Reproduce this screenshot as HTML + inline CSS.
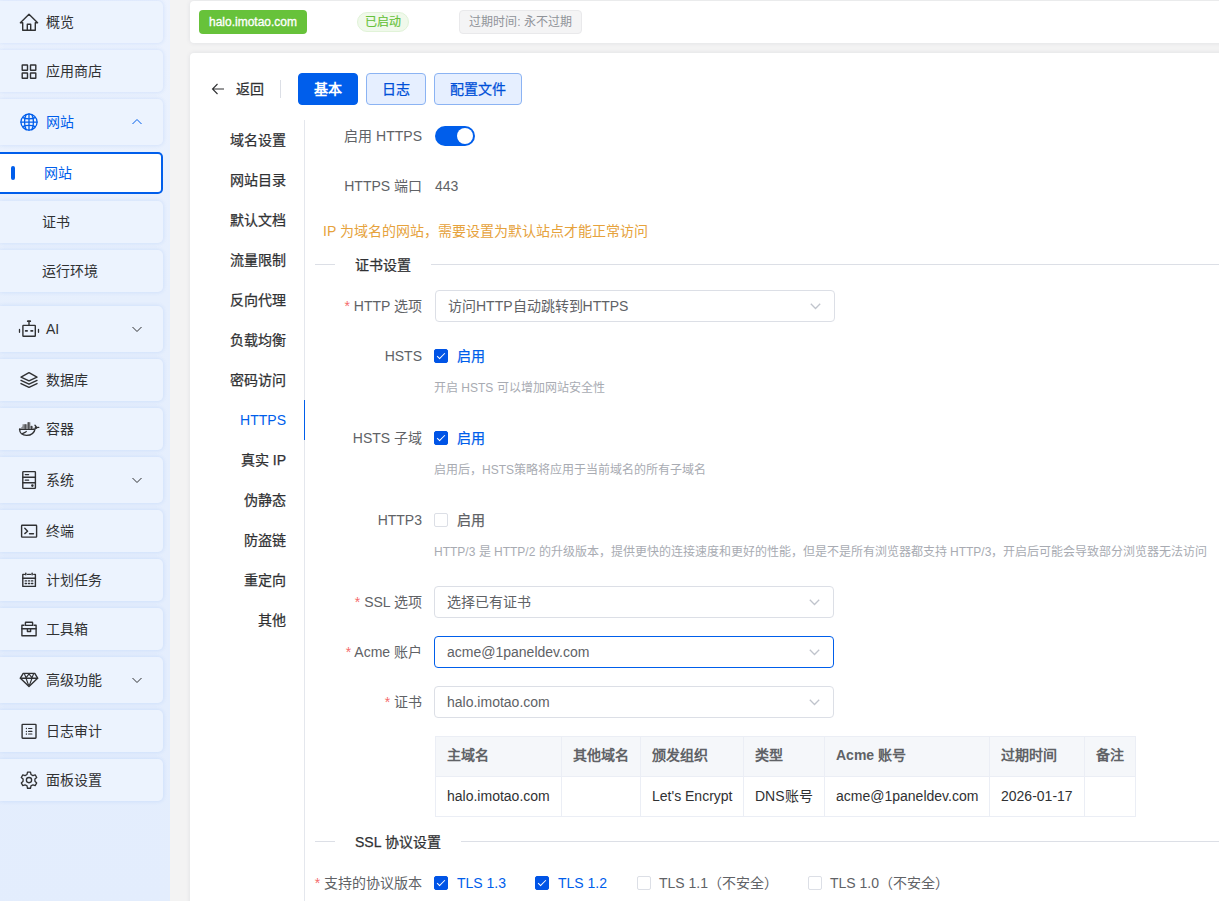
<!DOCTYPE html>
<html lang="zh-CN"><head><meta charset="utf-8">
<style>
*{box-sizing:border-box;margin:0;padding:0}
html,body{width:1219px;height:901px;overflow:hidden}
body{font-family:"Liberation Sans",sans-serif;font-size:14px;color:#1f2329;background:#f3f3f3;position:relative}
.abs{position:absolute}
#side{left:0;top:0;width:170px;height:901px;background:linear-gradient(170deg,#edf3fe 0%,#e6effd 35%,#e3edfd 100%)}
.mi{position:absolute;left:0;width:163px;height:42px;background:#ecf3fe;border-radius:0 5px 5px 0;box-shadow:0 0 4px rgba(40,110,230,.16)}
.mi .ic{position:absolute;left:19px;top:50%;margin-top:-9px;width:18px;height:18px}
.mi .tx{position:absolute;left:46px;top:0;line-height:42px;font-size:14px;color:#303133}
.mi.tall{height:46px}
.mi.tall .tx{line-height:46px}
.chev{position:absolute;left:131px;top:50%;margin-top:-4px;width:12px;height:8px}
.sub .tx{left:42px}
#hdr{left:190px;top:1px;width:1040px;height:42px;background:#fff;border-radius:4px;box-shadow:0 0 5px rgba(0,30,80,.09)}
#main{left:190px;top:53px;width:1040px;height:860px;background:#fff;border-radius:4px;box-shadow:0 0 5px rgba(0,30,80,.09)}
.tag{position:absolute;font-size:12px;text-align:center;border-radius:4px}
.btn{position:absolute;top:73px;height:32px;line-height:30px;text-align:center;font-size:14px;border-radius:4px;border:1px solid #8bb3f3;background:#e6efff;color:#0050d8;-webkit-text-stroke:0.25px #0050d8}
.tab{position:absolute;right:933px;font-size:14px;color:#303133;line-height:20px;-webkit-text-stroke:0.25px #303133}
.lbl{position:absolute;right:797px;font-size:14px;color:#606266;line-height:20px;white-space:nowrap}
.req{color:#f56c6c}
.sel{position:absolute;left:435px;width:400px;height:32px;border:1px solid #dcdfe6;border-radius:4px;background:#fff}
.sel .v{position:absolute;left:12px;top:0;line-height:30px;font-size:14px;color:#606266}
.sel svg{position:absolute;right:13px;top:12px}
.cb{position:absolute;width:14px;height:14px;border-radius:2px}
.cb.on{background:#0054e6;border:1px solid #0054e6}
.cb.off{background:#fff;border:1px solid #dcdfe6}
.cb.on::after{content:"";position:absolute;left:4px;top:1px;width:3px;height:7px;border:1px solid #fff;border-left:0;border-top:0;transform:rotate(45deg)}
.help{position:absolute;left:434px;font-size:12px;color:#a8abb2;line-height:16px;white-space:nowrap}
.cbl{position:absolute;font-size:14px;line-height:20px;white-space:nowrap}
.th,.td{position:absolute;line-height:20px;font-size:14px;white-space:nowrap}
.th{font-weight:bold;color:#606266}
.td{color:#303133}
.divl{position:absolute;height:1px;background:#dcdfe6}
.divt{position:absolute;font-size:14px;color:#303133;line-height:20px;-webkit-text-stroke:0.25px #303133}
</style></head><body>
<div id="side" class="abs">
  <div class="mi" style="top:1px;height:42px"><span class="tx">概览</span></div>
  <div class="mi" style="top:50px"><span class="tx">应用商店</span></div>
  <div class="mi tall" style="top:99px"><span class="tx" style="color:#005eeb">网站</span><svg class="chev" viewBox="0 0 12 8"><path d="M1.5 6l4.5-4.5 4.5 4.5" fill="none" stroke="#005eeb" stroke-width="1"/></svg></div>
  <div class="mi sub" style="top:152px;height:42px;background:#fff;border:2px solid #005eeb;border-left:0;box-shadow:none"><div class="abs" style="left:11px;top:12px;width:4px;height:14px;background:#005eeb;border-radius:2px"></div><span class="tx" style="color:#005eeb;left:44px;line-height:38px">网站</span></div>
  <div class="mi sub" style="top:201px"><span class="tx">证书</span></div>
  <div class="mi sub" style="top:250px"><span class="tx">运行环境</span></div>
  <div class="mi tall" style="top:306px"><span class="tx">AI</span><svg class="chev" viewBox="0 0 12 8"><path d="M1.5 2l4.5 4.5 4.5-4.5" fill="none" stroke="#303133" stroke-width="1"/></svg></div>
  <div class="mi" style="top:359px"><span class="tx">数据库</span></div>
  <div class="mi" style="top:408px"><span class="tx">容器</span></div>
  <div class="mi tall" style="top:457px"><span class="tx">系统</span><svg class="chev" viewBox="0 0 12 8"><path d="M1.5 2l4.5 4.5 4.5-4.5" fill="none" stroke="#303133" stroke-width="1"/></svg></div>
  <div class="mi" style="top:510px"><span class="tx">终端</span></div>
  <div class="mi" style="top:559px"><span class="tx">计划任务</span></div>
  <div class="mi" style="top:608px"><span class="tx">工具箱</span></div>
  <div class="mi tall" style="top:657px"><span class="tx">高级功能</span><svg class="chev" viewBox="0 0 12 8"><path d="M1.5 2l4.5 4.5 4.5-4.5" fill="none" stroke="#303133" stroke-width="1"/></svg></div>
  <div class="mi" style="top:710px"><span class="tx">日志审计</span></div>
  <div class="mi" style="top:759px"><span class="tx">面板设置</span></div>
<svg class="abs" style="left:16px;top:10px" width="26" height="26" viewBox="0 0 26 26"><g fill="none" stroke="#303133" stroke-width="1.4" stroke-linejoin="round" stroke-linecap="round"><path d="M13 4.3L4.4 12.8H6.7V20.3H19.3V12.8H21.6Z"/><path d="M11.3 20.3V14.2H14.7V20.3"/></g></svg><svg class="abs" style="left:16px;top:58px" width="26" height="26" viewBox="0 0 26 26"><g fill="none" stroke="#303133" stroke-width="1.4" stroke-linejoin="round" stroke-linecap="round"><rect x="6.2" y="7" width="5.3" height="5.3" rx="0.3"/><rect x="14.5" y="7" width="5.3" height="5.3" rx="0.3"/><rect x="6.2" y="15" width="5.3" height="5.3" rx="0.3"/><rect x="14.5" y="15" width="5.3" height="5.3" rx="0.3"/></g></svg><svg class="abs" style="left:16px;top:108px" width="26" height="26" viewBox="0 0 26 26"><g fill="none" stroke="#303133" stroke-width="1.4" stroke-linejoin="round" stroke-linecap="round"><g stroke="#005eeb" stroke-width="1.3"><circle cx="13" cy="14.1" r="8.1"/><path d="M4.9 14.1H21.1M13 6V22.2"/><path d="M10.2 6.6C8 10 8 18.2 10.2 21.6M15.8 6.6C18 10 18 18.2 15.8 21.6"/><path d="M6.8 9.6C10 11.2 16 11.2 19.2 9.6M6.8 18.6C10 17 16 17 19.2 18.6"/></g></g></svg><svg class="abs" style="left:16px;top:316px" width="26" height="26" viewBox="0 0 26 26"><g fill="none" stroke="#303133" stroke-width="1.4" stroke-linejoin="round" stroke-linecap="round"><rect x="6.9" y="9.4" width="12.4" height="10.8" rx="0.5"/><path d="M13 9.4V6"/><path d="M3.5 13.5V16.3M22.5 13.5V16.3" stroke-width="1.3"/><path d="M11.8 5.2H14.2" stroke-width="1.8"/><path d="M9.6 14.9H11.2M15 14.9H16.6" stroke-width="1.6"/></g></svg><svg class="abs" style="left:16px;top:367px" width="26" height="26" viewBox="0 0 26 26"><g fill="none" stroke="#303133" stroke-width="1.4" stroke-linejoin="round" stroke-linecap="round"><path d="M13 5.6L21 10.1L13 13.9L5 10.1Z"/><path d="M5 13.4L13 17.2L21 13.4"/><path d="M5 16.6L13 20.4L21 16.6"/></g></svg><svg class="abs" style="left:16px;top:416px" width="26" height="26" viewBox="0 0 26 26"><g fill="none" stroke="#303133" stroke-width="1.4" stroke-linejoin="round" stroke-linecap="round"><path d="M3.6 13.3H18.2"/><path d="M3.6 13.3C3.6 17 6.5 19.4 10.5 19.4C15 19.4 18.5 16.5 19.4 11.8" stroke-dasharray="none"/><path d="M19 9.2C19.8 10 20.4 11.2 20.5 12.2M19.5 11.6L22.8 11.4"/><path d="M4.2 12.8L6.5 10.2V8.3H11.2V6.2H14.4V10H16.6L17.6 12.8Z" fill="#8a8c90" stroke="none"/><path d="M9.2 12.8V8.6M12.8 12.8V6.5M15.6 12.8V10.2" stroke-width="0.9" stroke="#303133"/><path d="M6.5 17.6L9 16.4L10.3 15.5" stroke-width="1.2"/></g></svg><svg class="abs" style="left:16px;top:467px" width="26" height="26" viewBox="0 0 26 26"><g fill="none" stroke="#303133" stroke-width="1.4" stroke-linejoin="round" stroke-linecap="round"><rect x="6.8" y="4.6" width="12.6" height="16.8" rx="0.6"/><path d="M6.8 10.3H19.4M6.8 15.8H19.4"/><path d="M9.3 7.6H12.6M9.3 13.2H12.6" stroke-width="1.3"/><circle cx="16.4" cy="18.6" r="0.6" fill="#303133"/></g></svg><svg class="abs" style="left:16px;top:518px" width="26" height="26" viewBox="0 0 26 26"><g fill="none" stroke="#303133" stroke-width="1.4" stroke-linejoin="round" stroke-linecap="round"><rect x="5.6" y="7.3" width="15" height="11.8" rx="0.6"/><path d="M8.8 10.3L11.6 13.2L8.8 15.6"/><path d="M13.5 15.8H17.5" stroke-width="1.4"/></g></svg><svg class="abs" style="left:16px;top:567px" width="26" height="26" viewBox="0 0 26 26"><g fill="none" stroke="#303133" stroke-width="1.4" stroke-linejoin="round" stroke-linecap="round"><path d="M8.4 7.4H6.8V19.4H19.4V7.4H17.8M11.6 7.4H14.4"/><path d="M6.8 11.3H19.4"/><path d="M9.8 6.2V7.8M16.1 6.2V7.8" stroke-width="1.5"/><path d="M9.2 13.9H10.5M12.4 13.9H13.7M15.5 13.9H16.8M9.2 16.5H10.5M12.4 16.5H13.7M15.5 16.5H16.8" stroke-width="1.3"/></g></svg><svg class="abs" style="left:16px;top:616px" width="26" height="26" viewBox="0 0 26 26"><g fill="none" stroke="#303133" stroke-width="1.4" stroke-linejoin="round" stroke-linecap="round"><path d="M8 9.2H5.9V19.8H20.1V9.2H18"/><rect x="9.4" y="6.2" width="7.2" height="3.2" rx="0.5"/><path d="M5.9 12.7H20.1"/><path d="M11.4 12.7V15.5H14.6V12.7"/></g></svg><svg class="abs" style="left:16px;top:667px" width="26" height="26" viewBox="0 0 26 26"><g fill="none" stroke="#303133" stroke-width="1.4" stroke-linejoin="round" stroke-linecap="round"><path d="M7.2 6.4H18.8L21.6 11.2L13 19.4L4.4 11.2Z"/><path d="M4.4 11.2H21.6"/><path d="M8.4 6.8L10 10.8L13 6.8L16 10.8L17.6 6.8" stroke-width="1.1"/><path d="M10 11.2L12.5 18M16 11.2L13.5 18" stroke-width="1.1"/></g></svg><svg class="abs" style="left:16px;top:718px" width="26" height="26" viewBox="0 0 26 26"><g fill="none" stroke="#303133" stroke-width="1.4" stroke-linejoin="round" stroke-linecap="round"><rect x="6.1" y="6.4" width="13.9" height="13.8" rx="0.6"/><path d="M10.4 10.4V10.6M10.4 13.3V13.5M10.4 15.8V16.2" stroke-width="1.3"/><path d="M12.6 10.5H15.9M12.6 13.4H15.9M12.6 16H15.9" stroke-width="1.2"/></g></svg><svg class="abs" style="left:16px;top:767px" width="26" height="26" viewBox="0 0 26 26"><g fill="none" stroke="#303133" stroke-width="1.4" stroke-linejoin="round" stroke-linecap="round"><g transform="translate(13 13.1) scale(0.94) translate(-13 -13.4)"><path d="M11.4 4.9H14.6L15.1 7.4L17.2 8.6L19.6 7.8L21.2 10.6L19.3 12.3V14.7L21.2 16.4L19.6 19.2L17.2 18.4L15.1 19.6L14.6 22.1H11.4L10.9 19.6L8.8 18.4L6.4 19.2L4.8 16.4L6.7 14.7V12.3L4.8 10.6L6.4 7.8L8.8 8.6L10.9 7.4Z"/><circle cx="13" cy="13.4" r="2.8"/></g></g></svg></div>
<div id="hdr" class="abs"></div>
<div class="tag" style="left:199px;top:10px;width:108px;height:24px;line-height:24px;background:#67c23a;color:#fff;-webkit-text-stroke:0.3px #fff">halo.imotao.com</div>
<div class="tag" style="left:357px;top:12px;width:52px;height:20px;line-height:18px;background:#f0f9eb;border:1px solid #e1f3d8;color:#67c23a;border-radius:10px;-webkit-text-stroke:0.15px #67c23a">已启动</div>
<div class="tag" style="left:459px;top:10px;width:123px;height:24px;line-height:22px;background:#f4f4f5;border:1px solid #e9e9eb;color:#909399">过期时间: 永不过期</div>


<div id="main" class="abs"></div>
<!-- back row -->
<svg class="abs" style="left:211px;top:83px" width="14" height="12" viewBox="0 0 14 12"><path d="M13 6H1.5M6.5 1L1.5 6l5 5" fill="none" stroke="#303133" stroke-width="1.1"/></svg>
<div class="abs" style="left:236px;top:79px;line-height:20px;font-size:14px;color:#303133;-webkit-text-stroke:0.25px #303133">返回</div>
<div class="abs" style="left:280px;top:80px;width:1px;height:18px;background:#dcdfe6"></div>
<div class="btn" style="left:298px;width:60px;background:#005eeb;border-color:#005eeb;color:#fff;font-weight:bold;-webkit-text-stroke:0">基本</div>
<div class="btn" style="left:366px;width:60px">日志</div>
<div class="btn" style="left:434px;width:88px">配置文件</div>
<!-- tabs -->
<div class="abs" style="left:304px;top:120px;width:1px;height:790px;background:#e4e7ed"></div>
<div class="abs" style="left:304px;top:400px;width:1px;height:40px;background:#005eeb"></div>
<div class="tab" style="top:130px">域名设置</div>
<div class="tab" style="top:170px">网站目录</div>
<div class="tab" style="top:210px">默认文档</div>
<div class="tab" style="top:250px">流量限制</div>
<div class="tab" style="top:290px">反向代理</div>
<div class="tab" style="top:330px">负载均衡</div>
<div class="tab" style="top:370px">密码访问</div>
<div class="tab" style="top:410px;color:#005eeb;-webkit-text-stroke:0">HTTPS</div>
<div class="tab" style="top:450px">真实 IP</div>
<div class="tab" style="top:490px">伪静态</div>
<div class="tab" style="top:530px">防盗链</div>
<div class="tab" style="top:570px">重定向</div>
<div class="tab" style="top:610px">其他</div>
<!-- form -->
<div class="lbl" style="top:126px">启用 HTTPS</div>
<div class="abs" style="left:435px;top:126px;width:40px;height:20px;border-radius:10px;background:#005eeb"><div class="abs" style="left:22px;top:2px;width:16px;height:16px;border-radius:8px;background:#fff"></div></div>
<div class="lbl" style="top:176px">HTTPS 端口</div>
<div class="abs" style="left:435px;top:176px;line-height:20px;color:#606266">443</div>
<div class="abs" style="left:323px;top:221px;line-height:20px;font-size:14px;color:#e6a23c;white-space:nowrap">IP 为域名的网站，需要设置为默认站点才能正常访问</div>
<div class="divl" style="left:315px;top:264px;width:904px"></div>
<div class="divt" style="left:335px;top:255px;padding:0 20px;background:#fff">证书设置</div>

<div class="lbl" style="top:296px"><span class="req">*</span> HTTP 选项</div>
<div class="sel" style="top:290px"><span class="v">访问HTTP自动跳转到HTTPS</span><svg width="11" height="7" viewBox="0 0 11 7"><path d="M0.8 0.8L5.5 5.5l4.7-4.7" fill="none" stroke="#c0c4cc" stroke-width="1.3"/></svg></div>

<div class="lbl" style="top:346px">HSTS</div>
<div class="cb on" style="left:434px;top:349px"></div>
<div class="cbl" style="left:457px;top:346px;color:#005eeb;-webkit-text-stroke:0.25px #005eeb">启用</div>
<div class="help" style="top:380px">开启 HSTS 可以增加网站安全性</div>

<div class="lbl" style="top:428px">HSTS 子域</div>
<div class="cb on" style="left:434px;top:431px"></div>
<div class="cbl" style="left:457px;top:428px;color:#005eeb;-webkit-text-stroke:0.25px #005eeb">启用</div>
<div class="help" style="top:462px">启用后，HSTS策略将应用于当前域名的所有子域名</div>

<div class="lbl" style="top:510px">HTTP3</div>
<div class="cb off" style="left:434px;top:513px"></div>
<div class="cbl" style="left:457px;top:510px;color:#606266;-webkit-text-stroke:0.25px #606266">启用</div>
<div class="help" style="top:544px">HTTP/3 是 HTTP/2 的升级版本，提供更快的连接速度和更好的性能，但是不是所有浏览器都支持 HTTP/3，开启后可能会导致部分浏览器无法访问</div>

<div class="lbl" style="top:592px"><span class="req">*</span> SSL 选项</div>
<div class="sel" style="top:586px;left:434px"><span class="v">选择已有证书</span><svg width="11" height="7" viewBox="0 0 11 7"><path d="M0.8 0.8L5.5 5.5l4.7-4.7" fill="none" stroke="#c0c4cc" stroke-width="1.3"/></svg></div>

<div class="lbl" style="top:642px"><span class="req">*</span> Acme 账户</div>
<div class="sel" style="top:636px;left:434px;border-color:#005eeb"><span class="v">acme@1paneldev.com</span><svg width="11" height="7" viewBox="0 0 11 7"><path d="M0.8 0.8L5.5 5.5l4.7-4.7" fill="none" stroke="#c0c4cc" stroke-width="1.3"/></svg></div>

<div class="lbl" style="top:692px"><span class="req">*</span> 证书</div>
<div class="sel" style="top:686px;left:434px"><span class="v">halo.imotao.com</span><svg width="11" height="7" viewBox="0 0 11 7"><path d="M0.8 0.8L5.5 5.5l4.7-4.7" fill="none" stroke="#c0c4cc" stroke-width="1.3"/></svg></div>

<div class="abs" style="left:435px;top:736px;width:701px;height:81px;border:1px solid #ebeef5;background:#fff"></div>
<div class="abs" style="left:436px;top:737px;width:699px;height:39px;background:#f5f7fa"></div>
<div class="abs" style="left:436px;top:776px;width:699px;height:1px;background:#ebeef5"></div>
<div class="abs" style="left:561px;top:737px;width:1px;height:79px;background:#ebeef5"></div>
<div class="abs" style="left:640px;top:737px;width:1px;height:79px;background:#ebeef5"></div>
<div class="abs" style="left:743px;top:737px;width:1px;height:79px;background:#ebeef5"></div>
<div class="abs" style="left:824px;top:737px;width:1px;height:79px;background:#ebeef5"></div>
<div class="abs" style="left:989px;top:737px;width:1px;height:79px;background:#ebeef5"></div>
<div class="abs" style="left:1084px;top:737px;width:1px;height:79px;background:#ebeef5"></div>
<div class="th" style="left:447px;top:745px">主域名</div><div class="td" style="left:447px;top:786px">halo.imotao.com</div>
<div class="th" style="left:573px;top:745px">其他域名</div>
<div class="th" style="left:652px;top:745px">颁发组织</div><div class="td" style="left:652px;top:786px">Let's Encrypt</div>
<div class="th" style="left:755px;top:745px">类型</div><div class="td" style="left:755px;top:786px">DNS账号</div>
<div class="th" style="left:836px;top:745px">Acme 账号</div><div class="td" style="left:836px;top:786px">acme@1paneldev.com</div>
<div class="th" style="left:1001px;top:745px">过期时间</div><div class="td" style="left:1001px;top:786px">2026-01-17</div>
<div class="th" style="left:1096px;top:745px">备注</div>


<div class="divl" style="left:315px;top:841px;width:904px"></div>
<div class="divt" style="left:335px;top:832px;padding:0 20px;background:#fff">SSL 协议设置</div>

<div class="lbl" style="top:873px"><span class="req">*</span> 支持的协议版本</div>
<div class="cb on" style="left:434px;top:876px"></div>
<div class="cbl" style="left:457px;top:873px;color:#005eeb">TLS 1.3</div>
<div class="cb on" style="left:535px;top:876px"></div>
<div class="cbl" style="left:558px;top:873px;color:#005eeb">TLS 1.2</div>
<div class="cb off" style="left:637px;top:876px"></div>
<div class="cbl" style="left:659px;top:873px;color:#606266">TLS 1.1（不安全）</div>
<div class="cb off" style="left:808px;top:876px"></div>
<div class="cbl" style="left:830px;top:873px;color:#606266">TLS 1.0（不安全）</div>

</body></html>
